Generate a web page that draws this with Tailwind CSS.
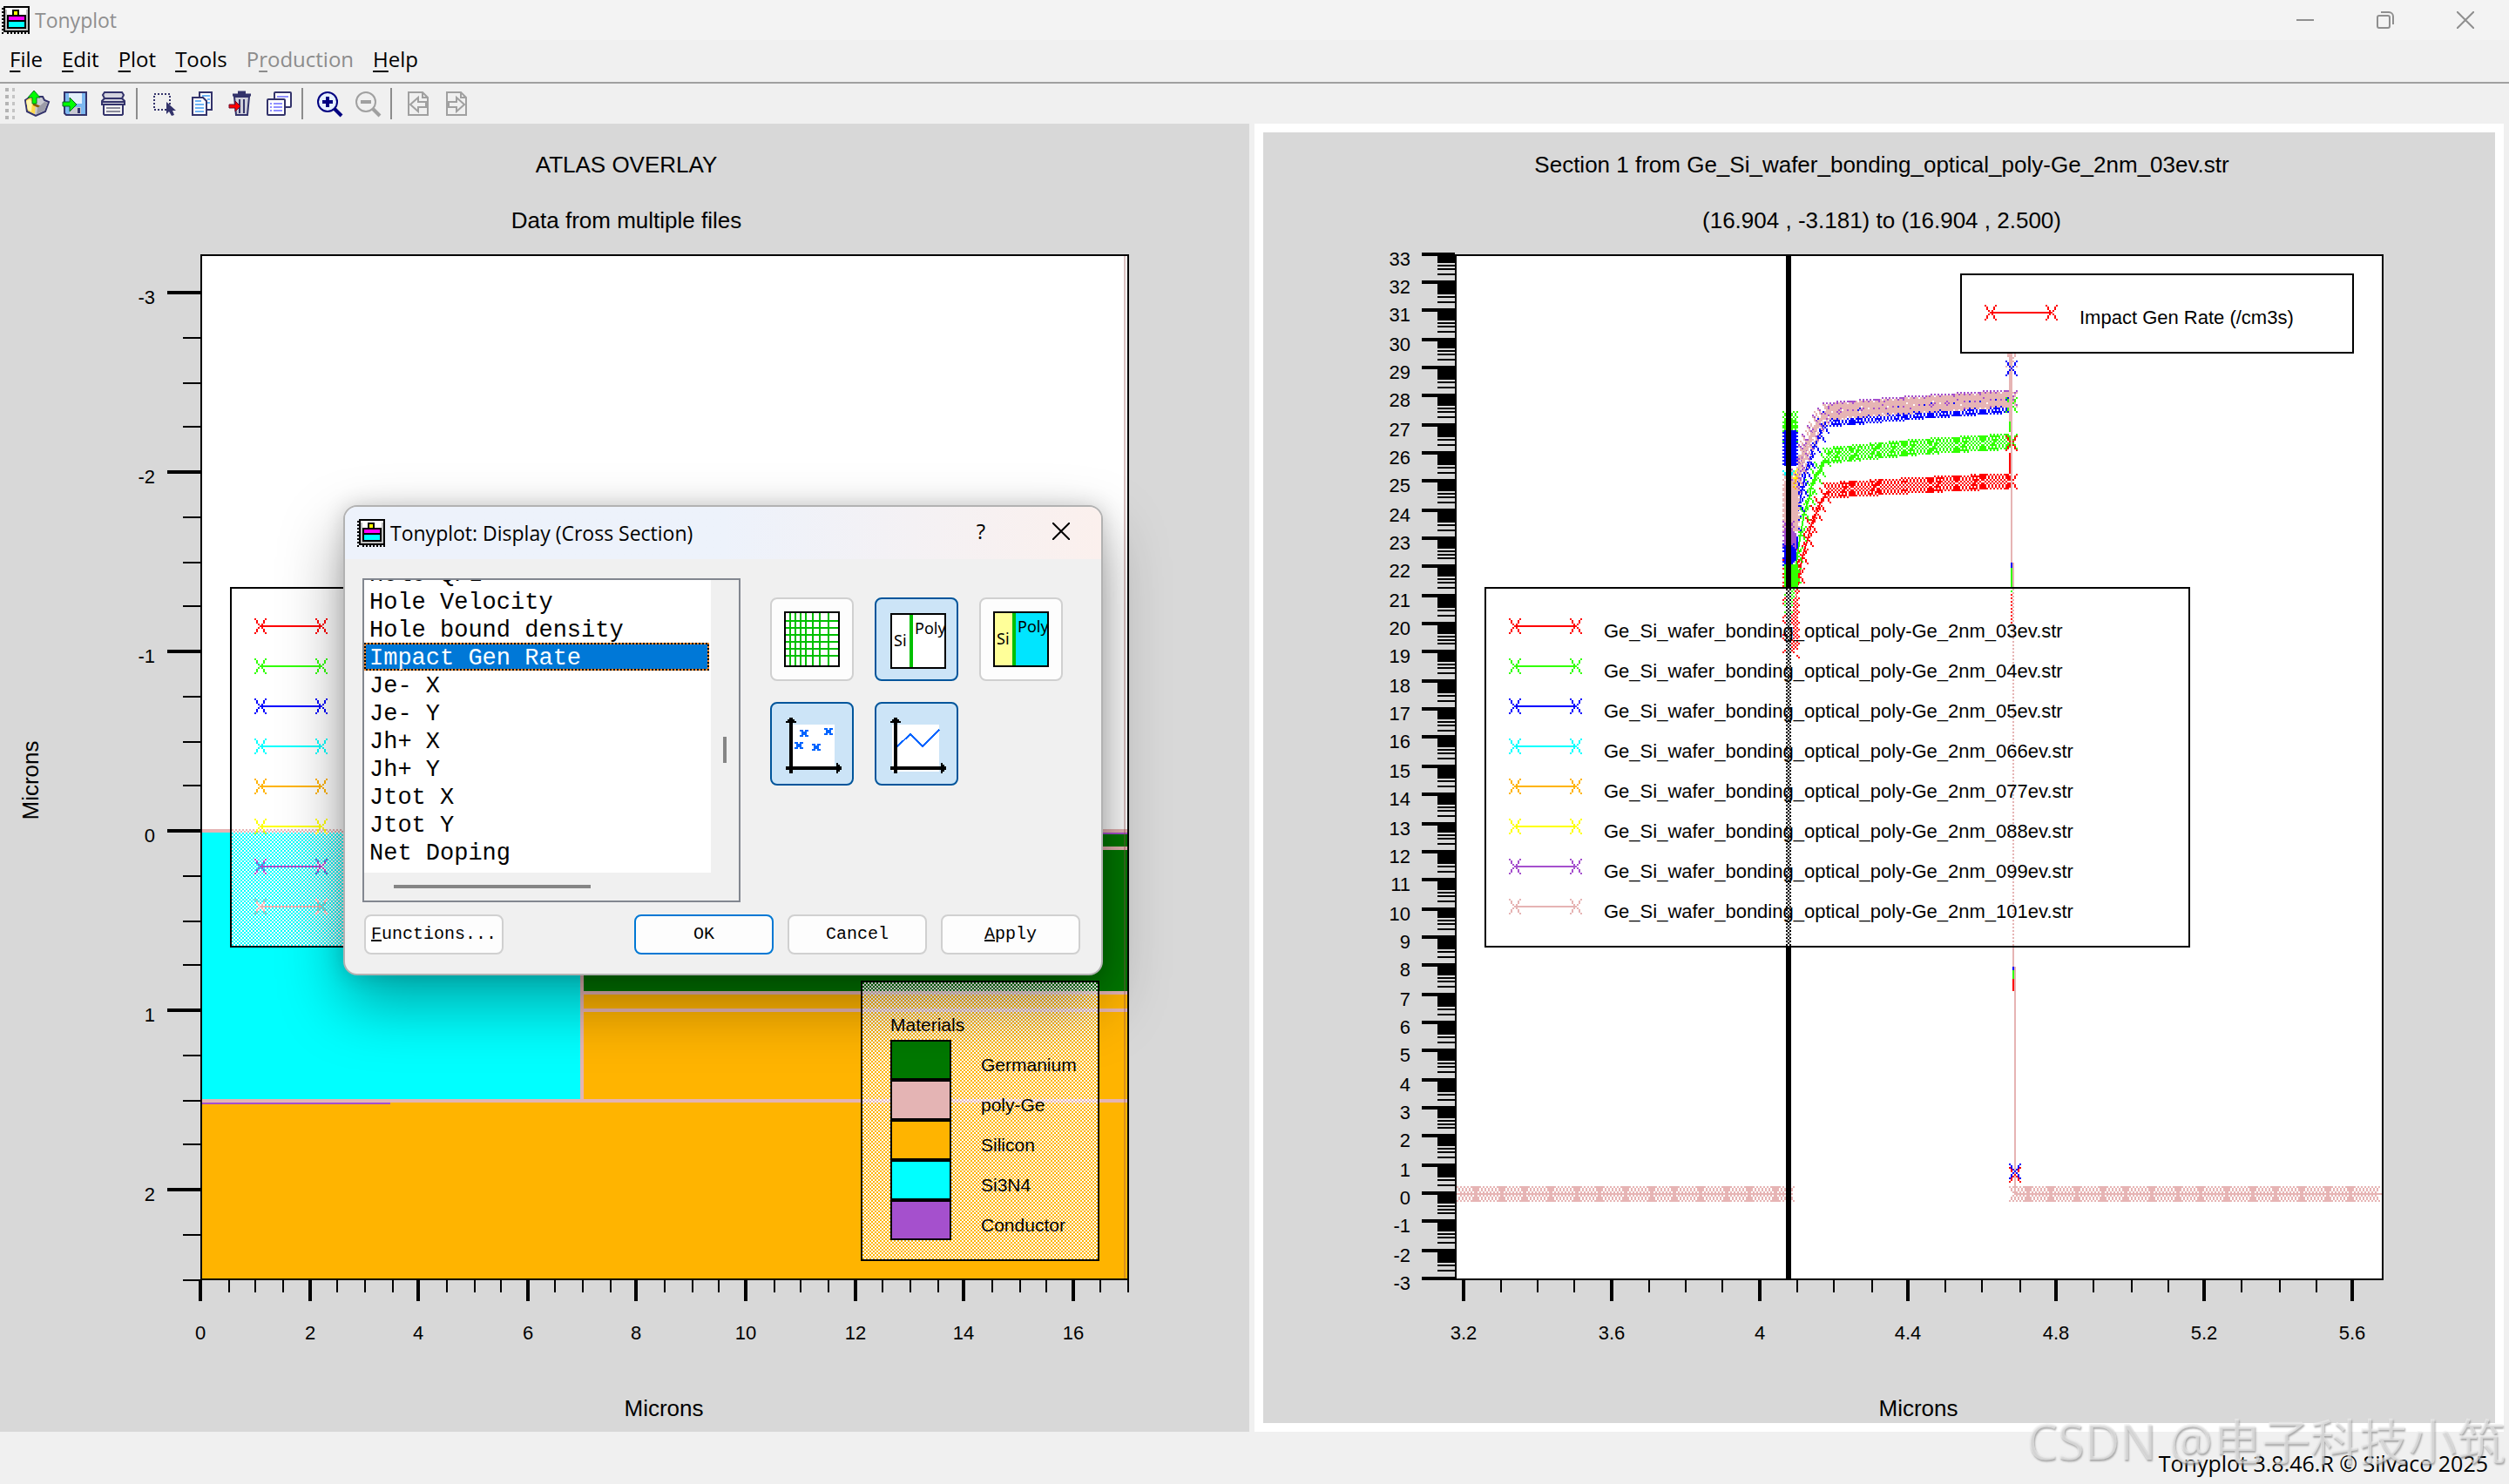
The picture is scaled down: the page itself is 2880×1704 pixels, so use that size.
<!DOCTYPE html>
<html lang="en">
  <head>
    <meta charset="UTF-8" />
    <meta name="viewport" content="width=device-width,initial-scale=1.0" />
    <title>Tonyplot</title>
    <script src="https://cdn.jsdelivr.net/npm/@tailwindcss/browser@4"></script>
  </head>
  <body
    class="relative flex flex-col h-screen overflow-hidden bg-[#f0f0f0] text-black font-['Open_Sans','Noto_Sans_CJK_SC',sans-serif]"
  >
    <!-- App icon, shared by the main window and the dialog -->
    <svg class="hidden">
      <symbol id="app-icon" viewBox="0 0 16 16" shape-rendering="crispEdges">
        <path fill="#fff" d="M1 0h15v15H1z" />
        <path fill="#c0c0c0" d="M2 13h13v1H2zM14 2h1v12h-1zM2 2h1v11H2z" />
        <path fill="#000" d="M1 0h15v16h-1V1H2v14H1zM1 14h14v1H1zM0 1h1v1H0zM0 3h1v1H0zM0 5h1v1H0zM0 7h1v1H0zM0 9h1v1H0zM0 11h1v1H0zM0 13h1v1H0zM0 15h1v1H0zM3 15h1v1H3zM5 15h1v1H5zM7 15h1v1H7zM9 15h1v1H9zM11 15h1v1h-1zM13 15h1v1h-1z" />
        <path fill="#000" d="M6 2h4v3h4v8H3V5h3z" />
        <path fill="#ff0" d="M7 3h2v2H7z" />
        <path fill="#f0f" d="M4 6h9v2H4z" />
        <path fill="#0ff" d="M4 9h9v3H4z" />
      </symbol>
    </svg>

    <!-- Title bar -->
    <header class="flex items-center h-[46px] shrink-0 pl-0.5 pr-1 bg-[#f3f3f3] text-[#8f8f8f]">
      <svg class="w-8 h-8"><use href="#app-icon" /></svg>
      <h1 class="ml-1.5 text-[23px] leading-8">Tonyplot</h1>
      <div class="ml-auto flex">
        <button class="w-[92px] h-11 grid place-items-center" aria-label="Minimize">
          <svg class="w-5 h-5" viewBox="0 0 20 20" fill="none" stroke="currentColor" stroke-width="2"><path d="M0 10h20" /></svg>
        </button>
        <button class="w-[92px] h-11 grid place-items-center" aria-label="Restore">
          <svg class="w-5 h-5" viewBox="0 0 20 20" fill="none" stroke="currentColor" stroke-width="2">
            <rect x="1" y="5" width="14" height="14" rx="2" />
            <path d="M5 1h9a5 5 0 0 1 5 5v9" />
          </svg>
        </button>
        <button class="w-[92px] h-11 grid place-items-center" aria-label="Close">
          <svg class="w-5 h-5" viewBox="0 0 20 20" fill="none" stroke="currentColor" stroke-width="2"><path d="M0 0l20 20M20 0L0 20" /></svg>
        </button>
      </div>
    </header>

    <!-- Menu bar -->
    <nav class="flex items-center h-12 shrink-0 pb-1 text-2xl leading-8 *:px-[11px]">
      <button><u class="underline-offset-4">F</u>ile</button>
      <button><u class="underline-offset-4">E</u>dit</button>
      <button><u class="underline-offset-4">P</u>lot</button>
      <button><u class="underline-offset-4">T</u>ools</button>
      <button class="text-[#8c8c8c]" disabled>P<u class="underline-offset-4">r</u>oduction</button>
      <button><u class="underline-offset-4">H</u>elp</button>
    </nav>

    <!-- Tool bar -->
    <div class="flex items-center h-12 shrink-0 border-t-2 border-[#a0a0a0]" role="toolbar">
      <svg class="w-5 h-11" viewBox="0 0 20 44" fill="#b4b4b4" shape-rendering="crispEdges">
        <path d="M6 4h4v4H6zM6 12h4v4H6zM6 20h4v4H6zM6 28h4v4H6zM6 36h4v4H6z" />
        <path d="M14 4h3v4h-3zM14 12h3v4h-3zM14 20h3v4h-3zM14 28h3v4h-3zM14 36h3v4h-3z" fill="#c4c4c4" />
      </svg>
      <button class="w-11 h-11 grid place-items-center" aria-label="Open">
        <svg class="w-8 h-8" viewBox="0 0 32 32">
          <path d="M3 12l6-4h14l2 4 5 2-4 11-11 5-10-5z" fill="#c8c8d0" stroke="#33336b" stroke-width="2" />
          <path d="M4 12l5-3 6 5-1 14-8-4z" fill="#ffd94a" />
          <path d="M4 13l4-2 3 3-1 11-4-2z" fill="#fff6b0" />
          <path d="M12 15l9 4v3l-9-4z" fill="#8a5a00" />
          <path d="M17 21l8-7 4 1-4 9-9 4z" fill="#9c9ca8" />
          <path d="M13 1l7 8h-4v7h-5V9H6z" fill="#0f0" stroke="#0a7a1e" stroke-width="1" />
        </svg>
      </button>
      <button class="w-11 h-11 grid place-items-center" aria-label="Save">
        <svg class="w-8 h-8" viewBox="0 0 32 32">
          <path d="M4 3h25v26H6l-2-2z" fill="#7db8f0" stroke="#33336b" stroke-width="2" />
          <path d="M9 4h15v12H9z" fill="#e4f0fb" />
          <path d="M10 20h13v8H10z" fill="#c8c8d2" />
          <path d="M19 21h3v6h-3z" fill="#33336b" />
          <path d="M2 14h8V9l8 8-8 8v-6H2z" fill="#0f0" stroke="#0a5a2e" stroke-width="1" />
        </svg>
      </button>
      <button class="w-11 h-11 grid place-items-center" aria-label="Print">
        <svg class="w-8 h-8" viewBox="0 0 32 32" stroke="#33336b" stroke-width="2">
          <path d="M6 3h20l2 3-2 4 3 3v4H3v-4l3-3-2-4z" fill="#d4d4de" />
          <path d="M6 10h20M3 14h26" />
          <path d="M5 17h22v11l-1 1H6l-1-1z" fill="#f2f2f2" />
          <path d="M8 21h16M8 25h16" stroke="#8a8a9a" />
        </svg>
      </button>
      <div class="w-3.5 h-9 pl-1"><div class="w-0.5 h-full bg-[#8c8c8c]"></div></div>
      <button class="w-11 h-11 grid place-items-center" aria-label="Select">
        <svg class="w-8 h-8" viewBox="0 0 32 32">
          <path d="M5 5h18v18H5z" fill="none" stroke="#33336b" stroke-width="2" stroke-dasharray="2 2" />
          <path d="M19 14v14l3-3 3 5 3-1-2-5h4z" fill="#33336b" />
        </svg>
      </button>
      <button class="w-11 h-11 grid place-items-center" aria-label="Copy">
        <svg class="w-8 h-8" viewBox="0 0 32 32">
          <path d="M13 3h14v20H13z" fill="#fff" stroke="#33336b" stroke-width="2" />
          <path d="M16 7h9M22 11h3M22 15h3" stroke="#6fb4f5" stroke-width="2" />
          <path d="M5 9h12l4 4v16H5z" fill="#fff" stroke="#33336b" stroke-width="2" />
          <path d="M8 13h7M8 17h10M8 21h10M8 25h10" stroke="#6fb4f5" stroke-width="2" />
        </svg>
      </button>
      <button class="w-11 h-11 grid place-items-center" aria-label="Delete">
        <svg class="w-8 h-8" viewBox="0 0 32 32">
          <path d="M9 8h17l-2 21H11z" fill="#d0d0da" stroke="#33336b" stroke-width="2" />
          <path d="M15 11v16M20 11v16" stroke="#33336b" stroke-width="2" />
          <path d="M7 6h21M13 3h9" stroke="#33336b" stroke-width="3" />
          <path d="M3 17h7v-4l6 6-6 6v-4H3z" fill="#f00" stroke="#6b1030" stroke-width="1" />
        </svg>
      </button>
      <button class="w-11 h-11 grid place-items-center" aria-label="Duplicate">
        <svg class="w-8 h-8" viewBox="0 0 32 32">
          <rect x="11" y="3" width="19" height="17" rx="1" fill="#fff" stroke="#33336b" stroke-width="2" />
          <path d="M14 8h13" stroke="#8f8fff" stroke-width="2" />
          <rect x="3" y="11" width="20" height="18" rx="1" fill="#fff" stroke="#33336b" stroke-width="2" />
          <path d="M6 16h2M10 16h10M6 20h2M10 20h10M6 24h2M10 24h10" stroke="#8f8fff" stroke-width="2" />
        </svg>
      </button>
      <div class="w-3.5 h-9 pl-1"><div class="w-0.5 h-full bg-[#8c8c8c]"></div></div>
      <button class="w-11 h-11 grid place-items-center" aria-label="Zoom in">
        <svg class="w-8 h-8" viewBox="0 0 32 32" fill="none" stroke="#000080">
          <circle cx="14" cy="14" r="11" fill="#e6f0ff" stroke-width="2" />
          <path d="M14 8v12M8 14h12" stroke-width="4" />
          <path d="M22 22l8 8" stroke-width="4" />
        </svg>
      </button>
      <button class="w-11 h-11 grid place-items-center" aria-label="Zoom out" disabled>
        <svg class="w-8 h-8" viewBox="0 0 32 32" fill="none" stroke="#a0a0a0">
          <circle cx="14" cy="14" r="11" stroke-width="2" />
          <path d="M8 14h12" stroke-width="4" />
          <path d="M22 22l8 8" stroke-width="4" />
        </svg>
      </button>
      <div class="w-3.5 h-9 pl-1"><div class="w-0.5 h-full bg-[#8c8c8c]"></div></div>
      <button class="w-11 h-11 grid place-items-center" aria-label="Previous" disabled>
        <svg class="w-8 h-8" viewBox="0 0 32 32" fill="none" stroke="#a0a0a0" stroke-width="2">
          <path d="M5 3h16l6 6v20H5zM21 3v6h6" />
          <path d="M7 17l9-8v5h9v6h-9v5z" />
        </svg>
      </button>
      <button class="w-11 h-11 grid place-items-center" aria-label="Next" disabled>
        <svg class="w-8 h-8" viewBox="0 0 32 32" fill="none" stroke="#a0a0a0" stroke-width="2">
          <path d="M5 3h16l6 6v20H5zM21 3v6h6" />
          <path d="M25 17l-9-8v5H7v6h9v5z" />
        </svg>
      </button>
    </div>

    <!-- Plots -->
    <main class="relative grid grid-cols-2 grid-rows-1 flex-1 min-h-0 gap-1.5 pr-1.5">
      <!-- Structure plot -->
      <section class="min-w-0 min-h-0 bg-[#d8d8d8]">
        <svg
          class="w-full h-full font-['Liberation_Sans',sans-serif] text-[22px]"
          viewBox="0 142 1434 1502"
          shape-rendering="crispEdges"
        >
          <defs>
            <pattern id="dither" width="4" height="4" patternUnits="userSpaceOnUse">
              <path d="M0 0h2v2H0zM2 2h2v2H2z" fill="#fff" />
            </pattern>
          </defs>
          <g text-anchor="middle" class="text-[26px]">
            <text x="719" y="198">ATLAS OVERLAY</text>
            <text x="719" y="262">Data from multiple files</text>
            <text x="762" y="1626">Microns</text>
            <text transform="translate(44 896) rotate(-90)">Microns</text>
          </g>
          <path fill="#fff" d="M231 293h1064v1176H231z" />
          <path fill="#0ff" d="M232 956h434v306H232z" />
          <path fill="#007800" d="M670 958h624v180H670z" />
          <path fill="#ffb400" d="M232 1266h1062v202H232zM670 1142h624v120H670z" />
          <path
            fill="#e4b4b4"
            d="M232 952h1062v4H232zM666 956h4v306h-4zM232 1262h1062v4H232zM670 972h624v4H670zM670 1138h624v4H670zM670 1158h624v4H670z"
          />
          <path fill="#a550cd" d="M670 956h624v2H670zM232 1266h216v2H232z" />
          <path fill="#965050" fill-opacity=".35" d="M1290 294h2v1174h-2z" />
          <path fill="none" stroke="#000" stroke-width="2" d="M231 293h1064v1176H231z" />
          <g id="left-axes"></g>
          <rect x="265" y="675" width="808" height="412" fill="url(#dither)" stroke="#000" stroke-width="2" />
          <g id="left-legend"></g>

          <rect x="989" y="1127" width="272" height="320" fill="url(#dither)" stroke="#000" stroke-width="2" />
          <g class="text-[21px]">
            <text x="1022" y="1184">Materials</text>
            <text x="1126" y="1230">Germanium</text>
            <text x="1126" y="1276">poly-Ge</text>
            <text x="1126" y="1322">Silicon</text>
            <text x="1126" y="1368">Si3N4</text>
            <text x="1126" y="1414">Conductor</text>
          </g>
          <g stroke="#000" stroke-width="2">
            <rect x="1023" y="1195" width="68" height="44" fill="#007800" />
            <rect x="1023" y="1241" width="68" height="44" fill="#e4b4b4" />
            <rect x="1023" y="1287" width="68" height="44" fill="#ffb400" />
            <rect x="1023" y="1333" width="68" height="44" fill="#0ff" />
            <rect x="1023" y="1379" width="68" height="44" fill="#a550cd" />
          </g>
        </svg>
      </section>

      <!-- Cross section plot -->
      <section class="min-w-0 min-h-0 bg-[#d8d8d8] border-[10px] border-white">
        <svg
          class="w-full h-full font-['Liberation_Sans',sans-serif] text-[22px]"
          viewBox="1450 152 1414 1482"
          shape-rendering="crispEdges"
        >
          <g text-anchor="middle" class="text-[26px]">
            <text x="2160" y="198">Section 1 from Ge_Si_wafer_bonding_optical_poly-Ge_2nm_03ev.str</text>
            <text x="2160" y="262">(16.904 , -3.181) to (16.904 , 2.500)</text>
            <text x="2202" y="1626">Microns</text>
          </g>
          <path fill="#fff" d="M1671 293h1064v1176H1671z" />
          <g id="curves"></g>
          <path fill="#000" d="M2050 294h6v1174h-6z" />
          <path fill="none" stroke="#000" stroke-width="2" d="M1671 293h1064v1176H1671z" />
          <g id="right-axes"></g>
          <rect x="1705" y="675" width="808" height="412" fill="url(#dither)" stroke="#000" stroke-width="2" />
          <g id="right-legend"></g>
          <rect x="2251" y="315" width="450" height="90" fill="#fff" stroke="#000" stroke-width="2" />
          <g id="quantity-legend"></g>
        </svg>
      </section>

      <!-- Display dialog -->
      <div
        role="dialog"
        aria-labelledby="dialog-title"
        class="absolute left-[394px] top-[438px] w-[872px] border-2 border-[#b2b2b2] rounded-2xl bg-[#f0f0f0] overflow-hidden shadow-[0_32px_72px_rgba(0,0,0,0.36),0_0_24px_rgba(0,0,0,0.16)]"
      >
        <div class="flex items-center h-[60px] pl-3.5 bg-linear-to-r from-[#edf2fb] from-50% to-[#fbf0ed]">
          <svg class="w-8 h-8"><use href="#app-icon" /></svg>
          <h2 id="dialog-title" class="ml-1.5 text-[23px] leading-8">Tonyplot: Display (Cross Section)</h2>
          <button class="ml-auto w-[92px] h-14 text-2xl pb-1" aria-label="Help">?</button>
          <button class="w-[92px] h-14 grid place-items-center pb-1" aria-label="Close">
            <svg class="w-5 h-5" viewBox="0 0 20 20" stroke="#000" stroke-width="2"><path d="M0 0l20 20M20 0L0 20" /></svg>
          </button>
        </div>

        <div class="flex gap-[34px] px-5 pt-[22px]">
          <div class="w-[434px] h-[372px] border-2 border-[#828790]">
            <div class="flex h-[336px]">
              <ul
                role="listbox"
                aria-label="Quantity"
                class="flex flex-col justify-end w-[398px] pb-2 overflow-hidden bg-white font-['Liberation_Mono',monospace] text-[27px] leading-8 *:shrink-0 *:h-8 *:pl-1.5 *:pt-0.5"
              >
                <li role="option">Hole QFL</li>
                <li role="option">Hole Velocity</li>
                <li role="option">Hole bound density</li>
                <li
                  role="option"
                  aria-selected="true"
                  class="mr-0.5 p-0.5! bg-[repeating-conic-gradient(#ff8728_0_25%,#000_0_50%)] bg-[length:4px_4px] text-white"
                >
                  <div class="h-7 pl-1 bg-[#0078d7]">Impact Gen Rate</div>
                </li>
                <li role="option">Je- X</li>
                <li role="option">Je- Y</li>
                <li role="option">Jh+ X</li>
                <li role="option">Jh+ Y</li>
                <li role="option">Jtot X</li>
                <li role="option">Jtot Y</li>
                <li role="option">Net Doping</li>
              </ul>
              <div class="pl-3.5 pt-[180px]"><div class="w-1 h-[30px] bg-[#858585]"></div></div>
            </div>
            <div class="pl-[34px] pt-3.5"><div class="w-[226px] h-1 bg-[#858585]"></div></div>
          </div>

          <div class="grid grid-cols-3 gap-6 content-start pt-[22px]">
            <button class="w-24 h-24 grid place-items-center rounded-lg border-2 border-[#d0d0d0] bg-[#fdfdfd]" aria-label="Mesh">
              <svg class="w-16 h-16" viewBox="0 0 64 64" shape-rendering="crispEdges">
                <path fill="#fff" d="M0 0h64v64H0z" />
                <path
                  stroke="#00c000"
                  stroke-width="2"
                  d="M7 0v64M13 0v64M19 0v64M25 0v64M33 0v64M41 0v64M51 0v64M0 11h64M0 19h64M0 27h64M0 35h64M0 43h64M0 51h64"
                />
                <path fill="none" stroke="#000" stroke-width="2" d="M1 1h62v62H1z" />
              </svg>
            </button>
            <button
              class="w-24 h-24 grid place-items-center pl-1 pt-1 rounded-lg border-2 border-[#00559b] bg-[#cce4f7]"
              aria-label="Regions"
              aria-pressed="true"
            >
              <svg class="w-16 h-16 font-['Noto_Sans',sans-serif] text-[18px]" viewBox="0 0 64 64" shape-rendering="crispEdges">
                <path fill="#fff" stroke="#000" stroke-width="2" d="M1 1h62v62H1z" />
                <path fill="#00c000" d="M22 2h4v60h-4z" />
                <text x="4" y="38">Si</text>
                <text x="28" y="24">Poly</text>
              </svg>
            </button>
            <button class="w-24 h-24 grid place-items-center rounded-lg border-2 border-[#d0d0d0] bg-[#fdfdfd]" aria-label="Materials">
              <svg class="w-16 h-16 font-['Noto_Sans',sans-serif] text-[18px]" viewBox="0 0 64 64" shape-rendering="crispEdges">
                <path fill="#00e5ff" stroke="#000" stroke-width="2" d="M1 1h62v62H1z" />
                <path fill="#ffff99" d="M2 2h20v60H2z" />
                <path fill="#00c000" d="M22 2h4v60h-4z" />
                <text x="4" y="38">Si</text>
                <text x="28" y="24">Poly</text>
              </svg>
            </button>
            <button
              class="w-24 h-24 grid place-items-center pl-1 pt-1 rounded-lg border-2 border-[#00559b] bg-[#cce4f7]"
              aria-label="Points"
              aria-pressed="true"
            >
              <svg class="w-16 h-16" viewBox="0 0 64 64" shape-rendering="crispEdges">
                <path fill="#fff" d="M8 8h48v48H8z" />
                <path d="M4 4h4v60H4zM0 56h60v4H0zM4 0h4v2H4zM2 2h8v2H2zM0 4h12v2H0zM58 52h2v12h-2zM60 54h2v8h-2zM62 56h2v4h-2z" />
                <path
                  fill="#0064ff"
                  d="M16 14h4v2h2v-2h4v2h-2v4h2v2h-4v-2h-2v2h-4v-2h2v-4h-2zM44 12h4v2h2v-2h4v2h-2v4h2v2h-4v-2h-2v2h-4v-2h2v-4h-2zM10 28h4v2h2v-2h4v2h-2v4h2v2h-4v-2h-2v2h-4v-2h2v-4h-2zM30 30h4v2h2v-2h4v2h-2v4h2v2h-4v-2h-2v2h-4v-2h2v-4h-2z"
                />
              </svg>
            </button>
            <button
              class="w-24 h-24 grid place-items-center pl-1 pt-1 rounded-lg border-2 border-[#00559b] bg-[#cce4f7]"
              aria-label="Lines"
              aria-pressed="true"
            >
              <svg class="w-16 h-16" viewBox="0 0 64 64" shape-rendering="crispEdges">
                <path fill="#fff" d="M2 8h54v54H2z" />
                <path d="M4 4h4v60H4zM0 56h60v4H0zM4 0h4v2H4zM2 2h8v2H2zM0 4h12v2H0zM58 52h2v12h-2zM60 54h2v8h-2zM62 56h2v4h-2z" />
                <path fill="none" stroke="#0064ff" stroke-width="2" d="M8 33l15-14 14 14 19-19" />
              </svg>
            </button>
          </div>
        </div>

        <div class="flex gap-4 pl-[22px] pr-6 pt-3.5 pb-[22px] font-['Liberation_Mono',monospace] text-xl leading-7">
          <button class="w-40 h-[46px] mr-auto rounded-lg border-2 border-[#d0d0d0] bg-[#fdfdfd]"><u>F</u>unctions...</button>
          <button class="w-40 h-[46px] rounded-lg border-2 border-[#0078d4] bg-[#fdfdfd]">OK</button>
          <button class="w-40 h-[46px] rounded-lg border-2 border-[#d0d0d0] bg-[#fdfdfd]">Cancel</button>
          <button class="w-40 h-[46px] rounded-lg border-2 border-[#d0d0d0] bg-[#fdfdfd]"><u>A</u>pply</button>
        </div>
      </div>
    </main>

    <!-- Status bar -->
    <footer class="flex items-center justify-end h-[60px] shrink-0 pr-6 pt-3 text-[25px] leading-8">
      <p>Tonyplot 3.8.46.R © Silvaco 2025</p>
    </footer>
    <p
      class="absolute right-1 bottom-4 text-[56px] leading-[68px] whitespace-nowrap text-[#f0f0f0]/60 [text-shadow:1px_2px_2px_rgba(120,120,120,0.6)]"
    >
      CSDN @电子科技小筑
    </p>

    <script>
      const colors = ['#ff0000', '#32ff00', '#0000ff', '#00ffff', '#ffb400', '#ffff00', '#a550cd', '#e6b4b4'];
      const names = ['03', '04', '05', '066', '077', '088', '099', '101'];
      const [RED, GREEN, BLUE, CYAN, ORANGE, YELLOW, PURPLE, PINK] = colors;

      const snap = (v) => Math.round(v / 2) * 2;
      const put = (id, html) => (document.getElementById(id).innerHTML = html);
      const rect = (x, y, w, h, fill = '#000') =>
        `<rect x="${x}" y="${y}" width="${w}" height="${h}" fill="${fill}"/>`;

      // x-shaped marker, 7 by 9 cells of 2px
      const cells = [[0, 0]];
      [[1, 1], [2, 2], [2, 3], [3, 4]].forEach(([x, y]) => cells.push([x, y], [-x, y], [x, -y], [-x, -y]));
      const cross = (x, y) =>
        cells.map(([dx, dy]) => `M${snap(x) + dx * 2} ${snap(y) + dy * 2}h2v2h-2z`).join('');
      const markers = (points, color) =>
        `<path fill="${color}" d="${points.map(([x, y]) => cross(x, y)).join('')}"/>`;
      const sample = (x, y, color) => rect(x, y, 70, 2, color) + markers([[x, y], [x + 70, y]], color);

      // Axes
      let left = '';
      for (let i = 0; i <= 22; i++) {
        const v = -3 + i / 4;
        const y = snap(954 + v * 206);
        if (i % 4 === 0) {
          left += rect(192, y - 2, 38, 4) + `<text x="178" y="${y + 13}" text-anchor="end">${v}</text>`;
        } else {
          left += rect(210, y - 1, 20, 2);
        }
      }
      for (let i = 0; i <= 34; i++) {
        const x = snap(230 + i * 31.3);
        if (i % 4 === 0) {
          left += rect(x - 2, 1470, 4, 24) + `<text x="${x}" y="1538" text-anchor="middle">${i / 2}</text>`;
        } else {
          left += rect(x, 1470, 2, 14);
        }
      }
      put('left-axes', left);

      let right = '';
      for (let v = 33; v >= -3; v--) {
        const at = 291 + (33 - v) * 32.7;
        const y = snap(at);
        right += rect(1632, y - 2, 38, 4) + `<text x="1619" y="${y + 13}" text-anchor="end">${v}</text>`;
        if (v > -3) {
          right += rect(1650, y, 20, 10);
          for (let n = 2; n < 6; n++) right += rect(1650, snap(at + (1 - Math.log10(n)) * 32.7), 20, 2);
        }
      }
      for (let i = 0; i <= 24; i++) {
        const x = snap(1679 + i * 42.57);
        if (i % 4 === 0) {
          const label = +(3.2 + i / 10).toFixed(1);
          right += rect(x - 2, 1470, 4, 24) + `<text x="${x}" y="1538" text-anchor="middle">${label}</text>`;
        } else {
          right += rect(x, 1470, 2, 14);
        }
      }
      put('right-axes', right);

      // Legends
      put('left-legend', colors.map((c, i) => sample(298, 718 + i * 46, c)).join(''));
      put(
        'right-legend',
        colors
          .map(
            (c, i) =>
              sample(1738, 718 + i * 46, c) +
              `<text x="1841" y="${732 + i * 46}">Ge_Si_wafer_bonding_optical_poly-Ge_2nm_${names[i]}ev.str</text>`
          )
          .join('')
      );
      put('quantity-legend', sample(2284, 358, RED) + '<text x="2387" y="372">Impact Gen Rate (/cm3s)</text>');

      // Curves
      const rise = {
        [RED]: [[2058, 746], [2060, 690], [2064, 660], [2068, 638], [2073, 617], [2078, 602], [2083, 587], [2088, 578], [2094, 568]],
        [GREEN]: [[2060, 660], [2062, 636], [2065, 612], [2070, 587], [2075, 569], [2078, 557], [2083, 546], [2088, 537], [2093, 526]],
        [BLUE]: [[2060, 600], [2064, 578], [2067, 560], [2072, 540], [2075, 528], [2082, 510], [2087, 498], [2092, 488]],
        [PURPLE]: [[2060, 556], [2062, 545], [2065, 532], [2070, 518], [2074, 506], [2079, 496], [2085, 484], [2091, 476]],
        [PINK]: [[2058, 566], [2062, 548], [2065, 534], [2067, 527], [2070, 520], [2072, 513], [2074, 508], [2077, 502], [2079, 498], [2082, 491], [2085, 485], [2088, 480], [2091, 477]],
      };
      const plateau = {
        [RED]: [562, 556, 551],
        [GREEN]: [522, 512, 506],
        [BLUE]: [480, 471, 464],
        [PURPLE]: [470, 462, 455],
        [PINK]: [472, 464, 457],
      };
      const level = ([a, b, c], t) => (t < 0.5 ? a + (b - a) * t * 2 : b + (c - b) * (t - 0.5) * 2);
      const stack = (x, from, to, step, color) => {
        const points = [];
        for (let y = from; y <= to; y += step) points.push([x, y]);
        return markers(points, color);
      };

      let curves = '';
      curves += stack(2052, 640, 740, 10, RED) + stack(2058, 640, 746, 9, RED);
      for (const c of [RED, GREEN, BLUE, PURPLE, PINK]) {
        const points = [...rise[c]];
        const path = rise[c].map(([x, y]) => `${snap(x) + 1},${snap(y) + 1}`).join(' ');
        curves += `<polyline points="${path}" fill="none" stroke="${c}" stroke-width="2"/>`;
        // pink sits on purple, so it is drawn denser
        const count = c === PINK ? 70 : 50;
        for (let i = 0; i < count; i++) points.push([2097 + (i * 210) / (count - 1), level(plateau[c], i / (count - 1))]);
        curves += markers(points, c);
      }
      // pile of points along the left junction
      curves += stack(2052, 480, 500, 6, GREEN) + stack(2056, 480, 500, 6, GREEN);
      curves += stack(2052, 504, 526, 4, BLUE) + stack(2056, 504, 526, 4, BLUE) + rect(2048, 494, 14, 41, BLUE);
      curves += stack(2052, 548, 548, 8, CYAN) + stack(2056, 546, 552, 6, YELLOW) + stack(2056, 556, 556, 8, ORANGE);
      curves += stack(2052, 552, 600, 6, PINK) + stack(2058, 560, 604, 5, PINK) + rect(2056, 562, 8, 48, PINK);
      curves += stack(2052, 606, 622, 6, PURPLE) + rect(2048, 612, 14, 20, PURPLE) + rect(2062, 616, 2, 14, BLUE);
      curves += stack(2052, 632, 640, 4, BLUE) + rect(2048, 630, 14, 14, BLUE);
      curves += rect(2048, 648, 2, 26, GREEN) + rect(2056, 648, 8, 28, GREEN);
      curves += stack(2052, 686, 698, 12, GREEN) + rect(2056, 676, 4, 20, GREEN) + rect(2058, 686, 6, 48, RED);

      // peak at the right junction
      curves += rect(2306, 474, 2, 22, GREEN) + rect(2306, 520, 2, 24, RED);
      curves += markers([[2308, 464]], GREEN) + markers([[2308, 508]], RED);
      curves += rect(2306, 404, 4, 80, PINK) + rect(2308, 404, 2, 242, PINK) + rect(2310, 646, 2, 464, PINK);
      curves += markers([[2308, 412]], PINK) + markers([[2308, 422]], BLUE);
      curves += rect(2308, 646, 2, 6, BLUE) + rect(2308, 652, 2, 28, GREEN) + rect(2308, 680, 2, 36, RED);
      curves += rect(2310, 1110, 2, 4, BLUE) + rect(2310, 1114, 2, 10, GREEN) + rect(2310, 1124, 2, 14, RED);
      curves += rect(2312, 1110, 2, 260, PINK);
      curves += markers([[2312, 1348]], RED) + markers([[2312, 1344]], BLUE);

      // zero rate outside the junctions
      const zero = [];
      for (let x = 1678; x <= 2054; x += 4.3) zero.push([x, 1370]);
      for (let x = 2312; x <= 2728; x += 4.3) zero.push([x, 1370]);
      curves += rect(1672, 1370, 386, 2, PINK) + rect(2312, 1370, 422, 2, PINK) + markers(zero, PINK);
      put('curves', curves);
    </script>
  </body>
</html>
